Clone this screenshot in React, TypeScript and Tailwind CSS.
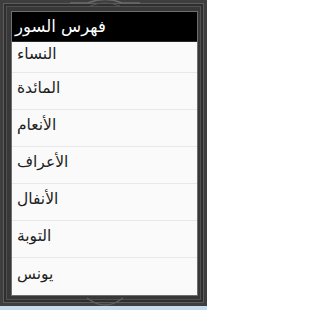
const suras = ['النساء', 'المائدة', 'الأنعام', 'الأعراف', 'الأنفال', 'التوبة', 'يونس']

export default function App() {
  return (
    <div className="w-[207px] h-[310px] flex flex-col overflow-hidden" style={{ fontFamily: '"DejaVu Sans", "Noto Sans", sans-serif' }}>
      <div className="relative h-[306px] bg-[#3e3e3e] p-[3px]">
        {/* ornamental frame */}
        <div className="h-full border border-[#5c5c5c] bg-[#2f2f2f] p-[2px]">
          <div className="h-full border border-[#505050] bg-[#383838] pt-[4px] pl-[4px] pr-[2px] pb-[3px]">
            <div className="h-full flex flex-col border border-[#6e6e6e] bg-[#fafafa]">
              <div className="h-[30px] bg-black flex items-center pl-[3px] pt-[1px] border-b border-[#2a2a2a]">
                <span dir="rtl" className="text-white text-[16.5px] leading-none">فهرس السور</span>
              </div>
              <div className="flex-1 flex flex-col">
                {suras.map((s, i) => (
                  <div
                    key={s}
                    className={`flex items-center pl-[5px] pb-[4px] ${i === 0 ? 'h-[31px]' : i === suras.length - 1 ? 'flex-1' : 'h-[37px]'} ${i < suras.length - 1 ? 'border-b border-[#e8e8e8]' : ''}`}
                  >
                    <span dir="rtl" className="text-[#1e1e1e] text-[15.5px] leading-none">{s}</span>
                  </div>
                ))}
              </div>
            </div>
          </div>
        </div>
        {/* top arch */}
        <svg className="absolute left-[70px] top-0" width="70" height="12" viewBox="0 0 70 12">
          <path d="M0 3 H18 Q35 -4 52 3 H70" fill="none" stroke="#6a6a6a" strokeWidth="1.5" />
          <path d="M20 6 Q35 0 50 6" fill="none" stroke="#555" strokeWidth="1" />
        </svg>
        {/* bottom arch */}
        <svg className="absolute left-[85px] bottom-0" width="40" height="10" viewBox="0 0 40 10">
          <path d="M2 2 Q20 16 38 2" fill="none" stroke="#5e5e5e" strokeWidth="1.5" />
        </svg>
      </div>
      <div className="h-[4px] bg-[#c6dbec]" />
    </div>
  )
}
